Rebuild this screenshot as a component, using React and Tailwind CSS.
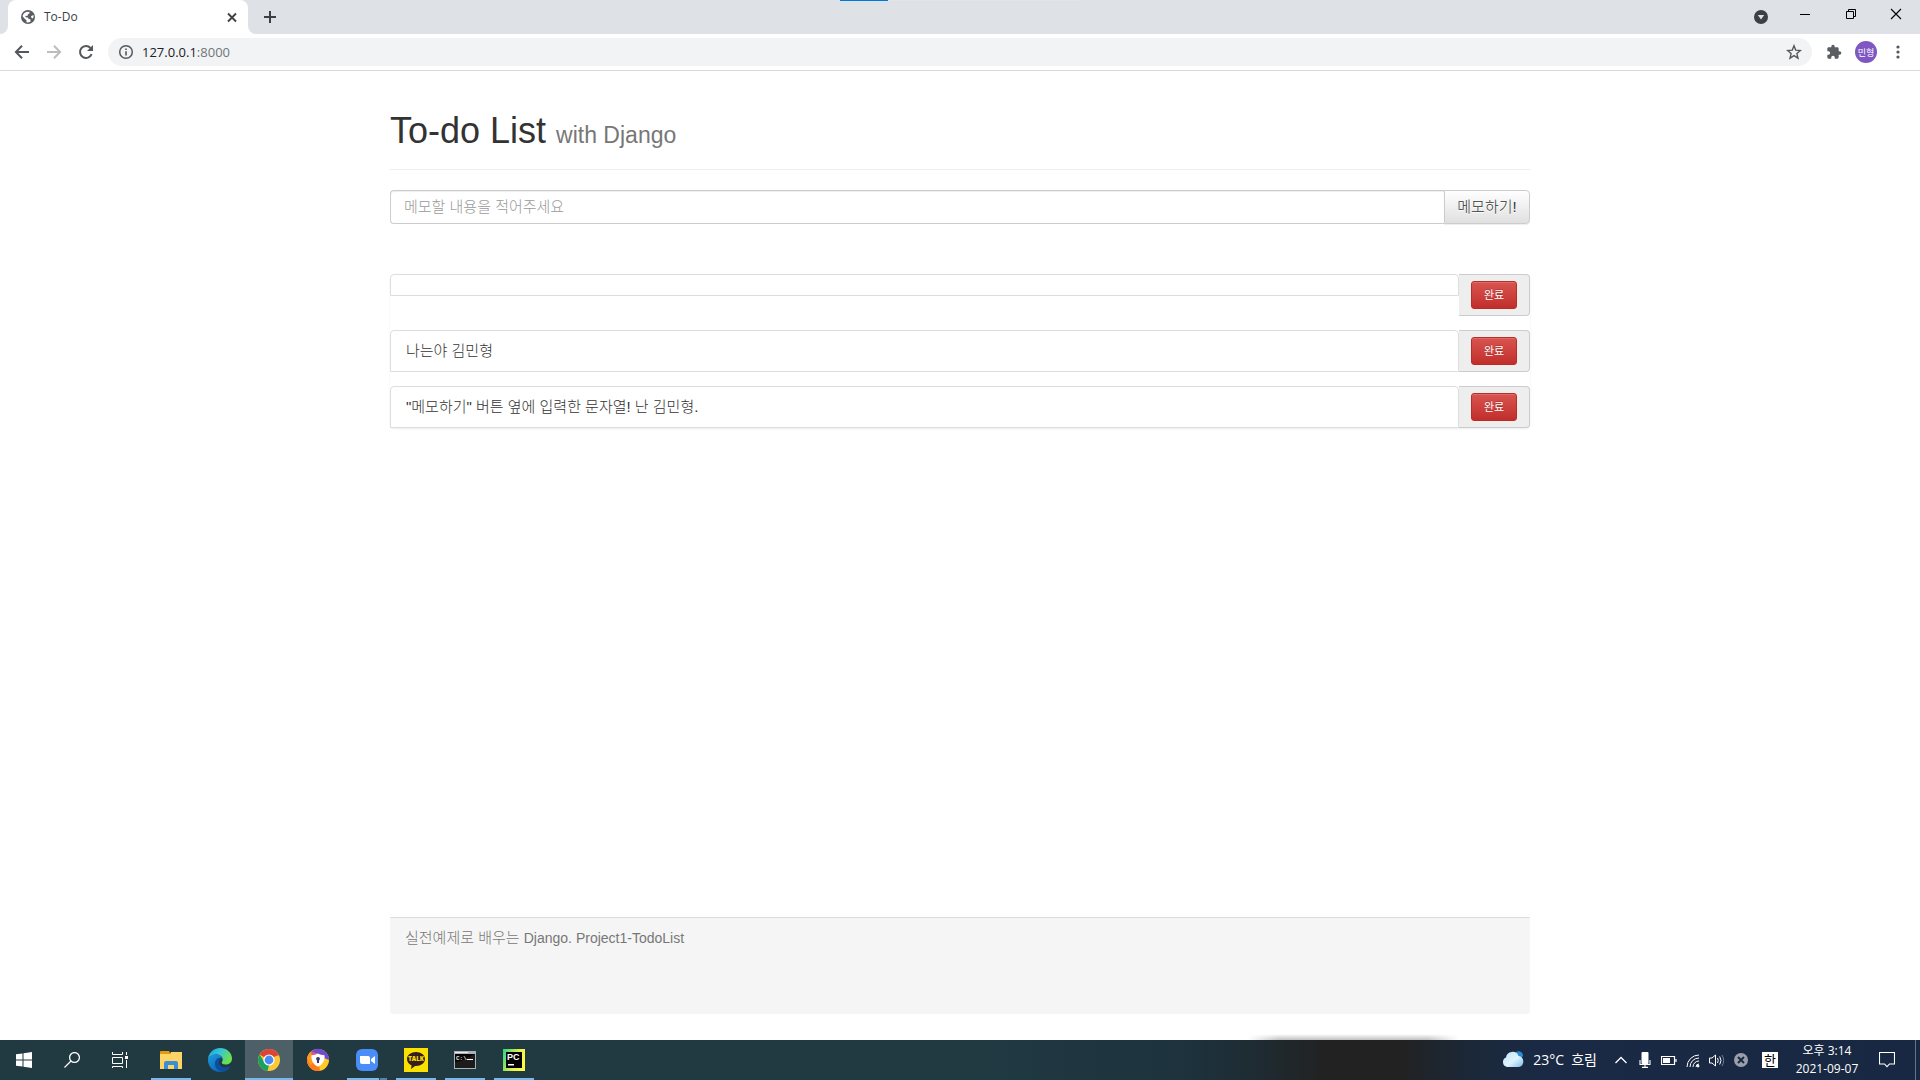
import React from 'react';

const UI = "font-['Open_Sans','Noto_Sans_CJK_KR',sans-serif]";

function Globe() {
  return (
    <svg className="size-4" viewBox="0 0 16 16">
      <circle cx="8" cy="8" r="7" fill="#5a5e63" />
      <path fill="#fff" d="M2.600 7.200C2.800 5.600 4 3.600 6.400 2.900L9.300 2.800 9.600 4.200 8 5.300 7.600 6.800 5.400 7 5.600 8.200 8 8.400 8.600 10 10.400 10.200 10.600 12.400C8.800 13.600 7 13.600 6.400 13.300L6.600 11.400 4.200 9.200ZM11 7.200 13.400 6 13.600 8.200 12.600 9.400 11.400 8.800Z" />
    </svg>
  );
}

function TabStrip() {
  return (
    <div className="relative flex h-[34px] bg-[#dee1e6] pr-px">
      <div className="absolute inset-x-0 top-0 mx-auto flex h-px w-60 bg-[#e5e5e5]"><div className="w-12 bg-[#0078d7]" /></div>
      <div className="flex h-full items-end">
        <svg className="size-2" viewBox="0 0 8 8"><path fill="#fff" d="M8 0v8H0a8 8 0 0 0 8-8Z" /></svg>
        <div className="flex h-full w-60 items-center rounded-t-lg bg-white pr-2 pl-3 text-xs text-[#3c4043]">
          <Globe />
          <span className="ml-2 grow">To-Do</span>
          <button aria-label="Close tab" className="flex size-4 items-center justify-center">
            <svg className="size-4" viewBox="0 0 16 16"><path d="m4 4.500 8 8m0-8-8 8" stroke="#3c4043" strokeWidth="1.800" /></svg>
          </button>
        </div>
        <svg className="size-2" viewBox="0 0 8 8"><path fill="#fff" d="M0 0v8h8a8 8 0 0 1-8-8Z" /></svg>
      </div>
      <button aria-label="New tab" className="flex w-7 items-center justify-center">
        <svg className="size-4" viewBox="0 0 16 16"><path d="M8 2v12M2 8h12" stroke="#3c4043" strokeWidth="2" /></svg>
      </button>
      <div className="ml-auto flex">
        <button aria-label="Search tabs" className="flex w-10 items-center justify-center">
          <svg className="size-4" viewBox="0 0 16 16"><circle cx="8" cy="8" r="7" fill="#3c4043" /><path d="M4.800 6h6.400L8 10.600Z" fill="#dee1e6" /></svg>
        </button>
        <button aria-label="Minimize" className="flex h-7 w-12 items-center justify-center">
          <svg className="size-3" viewBox="0 0 12 12"><path d="M1 6.500h10" stroke="#000" /></svg>
        </button>
        <button aria-label="Restore" className="flex h-7 w-11 items-center justify-center">
          <svg className="size-3" viewBox="0 0 12 12" fill="none" stroke="#000"><path d="M1.500 3.500h7v7h-7zM3.500 3.500v-2h7v7h-2" /></svg>
        </button>
        <button aria-label="Close" className="flex h-7 w-[46px] items-center justify-center">
          <svg className="size-3" viewBox="0 0 12 12"><path d="m1 1 10 10m0-10L1 11" stroke="#000" strokeWidth="1.100" /></svg>
        </button>
      </div>
    </div>
  );
}

function NavButton({ label, children }) {
  return <button aria-label={label} className="flex w-8 items-center justify-center">{children}</button>;
}

function Toolbar() {
  return (
    <div className="flex h-[37px] items-stretch border-b border-[#d9dadc] bg-white px-1.5 py-1">
      <NavButton label="Back">
        <svg className="size-4" viewBox="0 0 16 16" fill="none" stroke="#54585d" strokeWidth="2"><path d="M15 8H2.500M8 1.700 1.900 8 8 14.300" /></svg>
      </NavButton>
      <NavButton label="Forward">
        <svg className="size-4" viewBox="0 0 16 16" fill="none" stroke="#bbbdbf" strokeWidth="2"><path d="M1 8h12.500M8 1.700 14.100 8 8 14.300" /></svg>
      </NavButton>
      <NavButton label="Reload">
        <svg className="size-4" viewBox="0 0 16 16"><path d="M13.600 10.200A6 6 0 1 1 12.500 4" fill="none" stroke="#54585d" strokeWidth="2" /><path d="M15 1v6H9Z" fill="#54585d" /></svg>
      </NavButton>
      <div className="ml-1.5 flex grow items-center rounded-full bg-[#f1f3f4] pr-2.5 pl-2.5">
        <svg className="size-4" viewBox="0 0 16 16"><circle cx="8" cy="8" r="6.300" fill="none" stroke="#54585d" strokeWidth="1.500" /><path d="M7.200 7.200h1.600v4.300H7.200zM7.200 4.500h1.600v1.600H7.200z" fill="#54585d" /></svg>
        <div className="ml-2 text-[13px] leading-5 text-[#202124]">127.0.0.1<span className="text-[#70757a]">:8000</span></div>
        <button aria-label="Bookmark" className="ml-auto">
          <svg className="size-4" viewBox="0 0 16 16"><path d="m8 1.800 1.700 4.300 4.700.4-3.500 3.100 1.100 4.600L8 11.700l-4 2.500 1.100-4.600L1.600 6.500l4.700-.4Z" fill="none" stroke="#54585d" strokeWidth="1.400" /></svg>
        </button>
      </div>
      <button aria-label="Extensions" className="ml-1.5 flex w-8 items-center justify-center">
        <svg className="size-4" viewBox="0 0 24 24" fill="#5a5e63"><path d="M20.500 11H19V7c0-1.100-.9-2-2-2h-4V3.500a2.500 2.500 0 0 0-5 0V5H4c-1.100 0-2 .9-2 2v3.800h1.500a2.700 2.700 0 0 1 0 5.400H2V20c0 1.100.9 2 2 2h3.800v-1.500a2.700 2.700 0 0 1 5.400 0V22H17c1.100 0 2-.9 2-2v-4h1.500a2.500 2.500 0 0 0 0-5Z" /></svg>
      </button>
      <button className="flex w-8 items-center justify-center" aria-label="Profile">
        <span className="flex size-[22px] items-center justify-center rounded-full bg-[#7e57c2] text-[9px] leading-none text-white">민형</span>
      </button>
      <NavButton label="Menu">
        <svg className="size-4" viewBox="0 0 16 16" fill="#54585d"><circle cx="8" cy="3" r="1.600" /><circle cx="8" cy="8" r="1.600" /><circle cx="8" cy="13" r="1.600" /></svg>
      </NavButton>
    </div>
  );
}

const todos = [
  { id: 1, text: '' },
  { id: 2, text: '나는야 김민형' },
  { id: 3, text: '"메모하기" 버튼 옆에 입력한 문자열! 난 김민형.' },
];

function TodoPage() {
  return (
    <main className="mx-auto flex w-full max-w-[1140px] grow flex-col bg-white pb-[26px] font-['Liberation_Sans','Noto_Sans_CJK_KR',sans-serif] text-[15px] leading-5 font-light text-[#333]">
      <header className="mt-10 mb-5 border-b border-[#eee] pb-[18px]">
        <h1 className="text-4xl leading-10">
          To-do List <small className="text-[23px] leading-none text-[#777]">with Django</small>
        </h1>
      </header>
      <form className="flex h-[34px]" onSubmit={(e) => e.preventDefault()}>
        <input
          aria-label="메모"
          placeholder="메모할 내용을 적어주세요"
          className="min-w-0 grow rounded-l border border-r-0 border-[#ccc] bg-white px-[13px] shadow-[inset_0_1px_1px_rgba(0,0,0,0.075)] placeholder:text-[#999]"
        />
        <button className="w-[86px] rounded-r border border-[#ccc] bg-linear-to-b from-white to-[#e0e0e0] whitespace-nowrap shadow-[0_1px_1px_rgba(0,0,0,0.075)] [text-shadow:0_1px_0_#fff]">
          메모하기!
        </button>
      </form>
      <ul className="mt-[50px] flex flex-col gap-3.5 rounded shadow-[0_1px_2px_rgba(0,0,0,0.075)]">
        {todos.map((t) => (
          <li key={t.id} className="flex h-[42px] items-start">
            <div className={`min-w-0 grow rounded-t border border-[#ddd] bg-white px-[15px] py-2.5 ${t.text ? 'h-full' : ''}`}>
              {t.text}
            </div>
            <div className="flex h-full w-[71px] shrink-0 items-center rounded-r border border-l-0 border-[#ccc] bg-[#eee] pl-3">
              <button className="h-7 w-[46px] rounded-[3px] border border-[#b92c28] bg-linear-to-b from-[#d9534f] to-[#c12e2a] text-[11px] leading-none font-normal text-white shadow-[inset_0_1px_0_rgba(255,255,255,0.15)] [text-shadow:0_-1px_0_rgba(0,0,0,0.2)]">
                완료
              </button>
            </div>
          </li>
        ))}
      </ul>
      <footer className="mt-auto h-[97px] rounded-b-[3px] border-t border-[#ddd] bg-[#f5f5f5] px-[15px] py-2.5 text-[#777]">
        실전예제로 배우는 <span className="text-sm">Django. Project1-TodoList</span>
      </footer>
    </main>
  );
}

const icons = {
  explorer: (
    <svg className="size-6" viewBox="0 0 24 24">
      <path d="M1 4q0-1 1-1h8l1 2v3H1Z" fill="#e19a12" /><path d="M1 6h10l1-2h11v17H1Z" fill="#ffd466" />
      <path d="M5 21v-6q0-2 2-2h10q2 0 2 2v6h-4v-4H9v4Z" fill="#3b8fd6" />
    </svg>
  ),
  edge: (
    <svg className="size-6" viewBox="0 0 24 24">
      <defs>
        <linearGradient id="ea" x1="0" y1="0" x2="1" y2=".4"><stop offset="0" stopColor="#1ba0e0" /><stop offset=".5" stopColor="#33c5dc" /><stop offset="1" stopColor="#6be04f" /></linearGradient>
        <linearGradient id="eb" x1="0" y1="0" x2="1" y2="1"><stop offset="0" stopColor="#1b9de2" /><stop offset="1" stopColor="#0b4fa8" /></linearGradient>
      </defs>
      <path d="M0 12C0 5 5.500 0 12 0c7 0 12 5 12 10.500 0 4-3 6-6.500 6-2.500 0-3.800-1-3.800-2 0-.8 1-1.200 1-3C14.700 9 12 6.500 8.500 6.500 4 6.500 1 9 0 12Z" fill="url(#ea)" />
      <path d="M0 12C1 9 4 6.500 8.500 6.500c3 0 5 1.500 5.800 3.500C10 9 8 12 8.500 15c.6 4 5 6.800 9 6 1.800-.3 3.300-1.100 4.200-1.800C19.500 22.500 16 24 12 24 5 24 0 18.500 0 12Z" fill="url(#eb)" />
      <path d="M14.300 10C9.500 8.500 6.200 12.500 7 17c.6 3.500 3.500 6.300 7.500 6.800 3.500-.5 5.500-2 7.200-4.600.4-.7-.2-1-.8-.7C17 20.500 11.500 19 11 15c-.3-2.500 1.300-4.500 3.300-5Z" fill="#0d4f9d" />
    </svg>
  ),
  chrome: (
    <svg className="size-6" viewBox="0 0 24 24">
      <circle cx="12" cy="12" r="11" fill="#fbc935" />
      <path d="M2.500 6.500a11 11 0 0 1 19 0L12 12Z" fill="#dc4437" />
      <path d="M2.500 6.500 7.800 14.600 12 17 10.500 22.900A11 11 0 0 1 2.500 6.500Z" fill="#1aa15f" />
      <path d="M12 6.500h9.500l.3 1H12Z" fill="#dc4437" />
      <circle cx="12" cy="12" r="5.600" fill="#fff" /><circle cx="12" cy="12" r="4.400" fill="#4a8af4" />
    </svg>
  ),
  secure: (
    <svg className="size-6" viewBox="0 0 24 24">
      <circle cx="12" cy="12" r="11" fill="#ffc928" />
      <path d="M12 12 14 22.800A11 11 0 0 1 1.200 10Z" fill="#ff7a18" />
      <path d="M1.200 10A11 11 0 0 1 7 2.200L12 12 4 17Z" fill="#ff9a1f" />
      <path d="M5 3.500A11 11 0 0 1 23 12L18 10 12 6Z" fill="#724acb" />
      <path d="M5 3.500 12 6 6 8Z" fill="#e0528c" />
      <path d="M12 5.500c2 1.300 4 1.700 6.500 1.700.6 4.800-1.500 9.100-6.500 11.600-5-2.500-7.100-6.800-6.500-11.600C8 7.200 10 6.800 12 5.500Z" fill="#fff" />
      <circle cx="12" cy="10.800" r="1.900" fill="#39326b" /><path d="M11 11h2v4h-2z" fill="#39326b" />
    </svg>
  ),
  zoom: (
    <svg className="size-6" viewBox="0 0 24 24">
      <rect x="1" y="1" width="22" height="22" rx="6" fill="#4b8df8" />
      <path d="M5 8h8q2 0 2 2v6H7q-2 0-2-2ZM16 11l4-3v8l-4-3Z" fill="#fff" />
    </svg>
  ),
  talk: (
    <svg className="size-6" viewBox="0 0 24 24">
      <path d="M0 0h24v24H0z" fill="#fae100" /><path d="M12 4c5 0 9 3 9 7s-4 7-9 7H11l-4 3 .6-3.600C4.700 16.200 3 13.800 3 11c0-4 4-7 9-7Z" fill="#371d1e" />
      <text x="12" y="13.300" textAnchor="middle" fontSize="6" fontWeight="800" fill="#fae100" fontFamily="Open Sans">TALK</text>
    </svg>
  ),
  cmd: (
    <svg className="size-6" viewBox="0 0 24 24">
      <path d="M1 3h22v18H1z" fill="#aab0b5" /><path d="M2 6h20v14H2z" fill="#050505" /><path d="M2 4h13v1H2z" fill="#e9ecee" />
      <path d="M2 14q8-1 20-8v14H2Z" fill="#1c1c1c" />
      <text x="3" y="12" fontSize="6" fontWeight="700" fill="#e5e5e5" fontFamily="Liberation Mono">C:\</text><path d="M14 11h6v1h-6z" fill="#fff" />
    </svg>
  ),
  pycharm: (
    <svg className="size-6" viewBox="0 0 24 24">
      <defs><linearGradient id="py" x1="0" x2="1" y1="0" y2=".4"><stop offset="0" stopColor="#21d789" /><stop offset=".4" stopColor="#9be45c" /><stop offset=".7" stopColor="#e6f24c" /><stop offset="1" stopColor="#fcf84a" /></linearGradient></defs>
      <path d="M1 1h22v22H1z" fill="url(#py)" /><path d="M4 4h16v16H4z" fill="#000" />
      <text x="5" y="12" fontSize="9" fontWeight="700" fill="#fff" fontFamily="Liberation Sans">PC</text><path d="M6 16h6v1.500H6z" fill="#fff" />
    </svg>
  ),
};

const apps = [
  { id: 'explorer', open: true },
  { id: 'edge' },
  { id: 'chrome', open: true, active: true },
  { id: 'secure' },
  { id: 'zoom', open: true, stacked: true },
  { id: 'talk', open: true },
  { id: 'cmd', open: true },
  { id: 'pycharm', open: true },
];

function AppButton({ app }) {
  return (
    <button aria-label={app.id} className={`flex h-10 w-12 flex-col items-center pt-2 ${app.active ? 'bg-[#4d6068]' : ''}`}>
      {icons[app.id]}
      {app.open && (
        <span className={`mt-auto flex h-0.5 justify-end bg-[#76b9ed] ${app.active ? 'w-12' : 'w-10'}`}>
          {app.stacked && <span className="w-2 border-l border-[#2b4350] bg-[#5286ae]" />}
        </span>
      )}
    </button>
  );
}

function Taskbar() {
  return (
    <div className="relative flex h-10 shrink-0 items-stretch bg-[linear-gradient(90deg,#213940_0%,#213a42_50%,#1d323d_62%,#1f2a30_66%,#222222_69%,#222222_73%,#1b2838_76.500%,#1a2a44_80%,#192842_100%)] text-white">
      <div className="absolute -top-1.5 left-[65%] h-1.5 w-[11%] bg-linear-to-b from-transparent to-black/25 [mask-image:linear-gradient(90deg,transparent,#000_15%,#000_85%,transparent)]" />
      <button aria-label="Start" className="flex w-12 items-center justify-center">
        <svg className="size-4" viewBox="0 0 16 16" fill="#fff"><path d="M0 2.300 6.500 1.400v6.100H0zM7.500 1.200 16 0v7.500H7.500zM0 8.500h6.500v6.100L0 13.700zM7.500 8.500H16V16l-8.500-1.200z" /></svg>
      </button>
      <button aria-label="Search" className="flex w-12 items-center justify-center">
        <svg className="size-4" viewBox="0 0 16 16" fill="none" stroke="#fff" strokeWidth="1.300"><circle cx="10.500" cy="5.500" r="4.900" /><path d="M7 9 .5 15.500" /></svg>
      </button>
      <button aria-label="Task view" className="mr-1 flex w-[47px] items-center justify-center">
        <svg className="size-4" viewBox="0 0 16 16" fill="none" stroke="#fff"><path d="M.5 0v2.500h10V0M.5 5.500h10v6H.5zM.5 16v-1.500h10V16M14.500 0v3M14.500 8v8" /><path d="M13 4h3v3h-3z" fill="#fff" stroke="none" /></svg>
      </button>
      <nav aria-label="Apps" className="flex gap-px">{apps.map((a) => <AppButton key={a.id} app={a} />)}</nav>
      <div className="ml-auto flex items-center">
        <button className="mr-3 flex items-center text-sm leading-5 whitespace-nowrap">
          <svg className="mr-2 size-6" viewBox="0 0 24 24">
            <defs><linearGradient id="cl" x1="0" x2="1" y2="1"><stop offset="0" stopColor="#bfe3f8" /><stop offset=".55" stopColor="#dff3fd" /><stop offset="1" stopColor="#79bdea" /></linearGradient></defs>
            <path d="M14 5a4.500 4.500 0 0 1 8 3l-3 4Z" fill="#2f8bd0" /><path d="M6 19a5 5 0 0 1-1-9.500A6.500 6.500 0 0 1 17.500 8 5.600 5.600 0 0 1 18 19Z" fill="url(#cl)" />
          </svg>
          23°C&nbsp; 흐림
        </button>
        <button aria-label="Hidden icons" className="flex w-6 justify-center"><svg className="size-4" viewBox="0 0 16 16"><path d="m2.500 11 5.500-5.500 5.500 5.500" fill="none" stroke="#fff" strokeWidth="1.300" /></svg></button>
        <button aria-label="Microphone" className="flex w-6 justify-center"><svg className="size-4" viewBox="0 0 16 16"><rect x="4.500" y="0" width="7" height="12" rx="1" fill="#fff" /><path d="M3 8v4.500h10V8M8 12v3M5 15.400h6" fill="none" stroke="#fff" strokeWidth="1.100" /></svg></button>
        <button aria-label="Battery" className="flex w-6 justify-center"><svg className="size-4" viewBox="0 0 16 16"><path d="M.5 4.500h13v8H.5zM15 7v3" fill="none" stroke="#fff" strokeWidth="1.200" /><path d="M2 6h7v5H2z" fill="#fff" /></svg></button>
        <button aria-label="Network" className="flex w-6 justify-center"><svg className="size-4" viewBox="0 0 16 16" fill="none" stroke="#fff"><path d="M2 15A12 12 0 0 1 14 3M5 15a9 9 0 0 1 9-9M8 15a6 6 0 0 1 6-6M11 15a3 3 0 0 1 3-3" /><circle cx="13" cy="14" r="1" fill="#fff" /></svg></button>
        <button aria-label="Volume" className="flex w-6 justify-center"><svg className="size-4" viewBox="0 0 16 16" fill="none" stroke="#fff"><path d="M.5 6v5h2.500l3.500 3V3L3 6ZM8.500 6q1.500 2.500 0 5M10.700 4.500q2.600 4 0 8" /><path d="M13 3q3.400 5.500 0 11" stroke="#71809a" /></svg></button>
        <button aria-label="Status" className="flex w-6 justify-center"><svg className="size-4" viewBox="0 0 16 16"><circle cx="8" cy="8" r="7" fill="#9aa0aa" /><path d="m5 5 6 6m0-6-6 6" stroke="#1a2942" strokeWidth="2" /></svg></button>
        <button className="mx-[9px] flex size-4 items-center justify-center bg-white text-[13px] leading-none text-black">한</button>
        <button className="w-20 text-center text-xs leading-[18px]"><span className="block">오후 3:14</span><span className="block">2021-09-07</span></button>
        <button aria-label="Notifications" className="flex w-10 justify-center"><svg className="size-4" viewBox="0 0 16 16"><path d="M.5.500h15v11.500h-5L8 14.700 5.500 12h-5Z" fill="none" stroke="#fff" strokeWidth="1.100" /></svg></button>
        <div className="mr-1 ml-2 h-10 w-px bg-[#66738a]" />
      </div>
    </div>
  );
}

export default function App() {
  return (
    <div className={`flex min-h-screen flex-col bg-white ${UI}`}>
      <TabStrip />
      <Toolbar />
      <TodoPage />
      <Taskbar />
    </div>
  );
}
